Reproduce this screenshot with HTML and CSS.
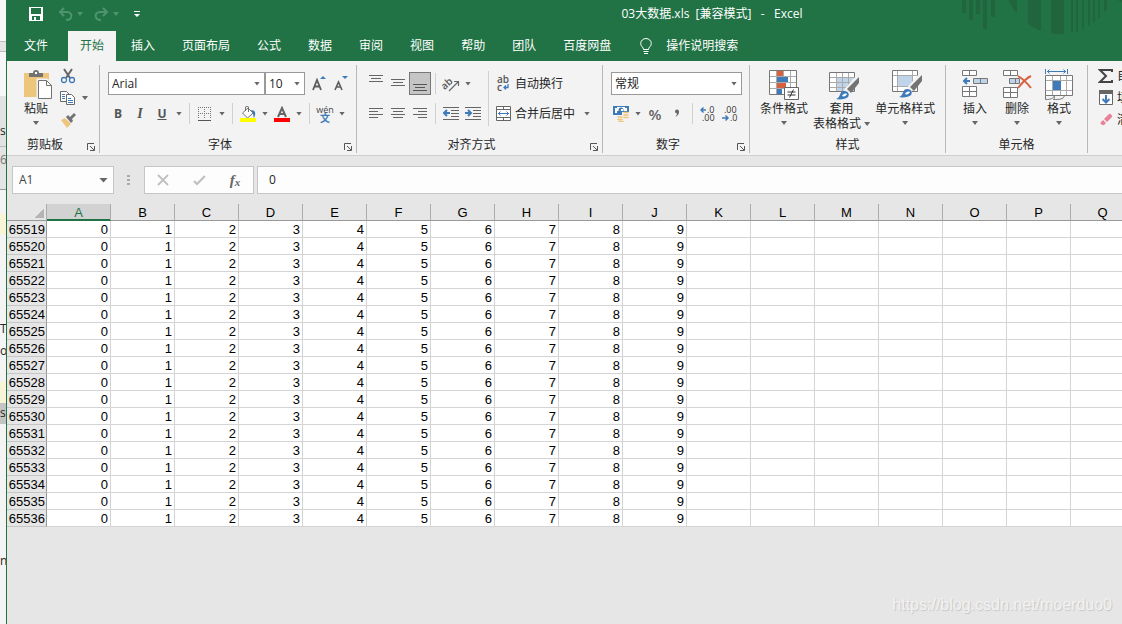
FILE: index.html
```html
<!DOCTYPE html>
<html lang="zh-CN">
<head>
<meta charset="utf-8">
<title>03大数据.xls - Excel</title>
<link rel="stylesheet" href="styles.css">
</head>
<body>
<div class="desktop">
  <aside class="behind" aria-hidden="true">
    <div class="strip s-top"></div>
    <div class="strip s-bar"></div>
    <div class="strip s-line"></div>
    <div class="strip s-gray">s</div>
    <div class="strip s-gray2">6</div>
    <div class="strip s-white"></div>
    <div class="strip s-yellow"></div>
    <div class="strip s-code"><span>Te</span><span>ou</span></div>
    <div class="strip s-yellow"></div>
    <div class="strip s-sel">s</div>
    <div class="strip s-rest">n</div>
  </aside>
  <main class="window">
    <header class="titlebar">
      <svg class="ornament" width="160" height="36" viewBox="962 0 160 36" aria-hidden="true">
        <defs><clipPath id="disc"><circle cx="1060" cy="-22" r="56"/></clipPath></defs>
        <path d="M962 0h4v13h-4zM969 0h4v20h-4zM976 0h4v14h-4zM983 0h4v29h-4zM991 0h4v17h-4z"/>
        <path clip-path="url(#disc)" d="M1004 0h13v36h-13zM1028 0h13v36h-13zM1051 0h13v36h-13zM1071 0h2v36h-2zM1076 0h2v36h-2zM1082 0h2v36h-2zM1088 0h2v36h-2zM1093 0h2v36h-2zM1098 0h2v36h-2zM1104 0h3v36h-3z"/>
        <path d="M1117 0h5v2z"/>
      </svg>
      <div class="quick">
        <button aria-label="保存"><svg width="14" height="14" viewBox="0 0 14 14"><path fill="#fff" fill-rule="evenodd" d="M0 0h14v14H0zM2 1v6h10V1zM3 9v4h2v-3h2v3h4V9z"/></svg></button>
        <button class="dim" aria-label="撤消"><svg width="15" height="14" viewBox="0 0 15 14"><path fill="none" stroke="currentColor" stroke-width="2" d="M6 1L2 5l4 4M2 5h7c6 0 6 8-1 8"/></svg><i class="caret"></i></button>
        <button class="dim" aria-label="恢复"><svg width="15" height="14" viewBox="0 0 15 14"><path fill="none" stroke="currentColor" stroke-width="2" d="M9 1l4 4-4 4M13 5H6c-6 0-6 8 1 8"/></svg><i class="caret"></i></button>
        <button aria-label="自定义快速访问工具栏"><svg width="6" height="6" viewBox="0 0 6 6"><path fill="#fff" d="M0 0h6v1H0zM0 3h6L3 6z"/></svg></button>
      </div>
      <h1 class="title">03大数据.xls&nbsp; [兼容模式]&nbsp;&nbsp; -&nbsp;&nbsp; Excel</h1>
    </header>
    <nav class="tabs">
      <button class="file">文件</button>
      <button class="active">开始</button>
      <button>插入</button>
      <button>页面布局</button>
      <button>公式</button>
      <button>数据</button>
      <button>审阅</button>
      <button>视图</button>
      <button>帮助</button>
      <button>团队</button>
      <button>百度网盘</button>
      <button class="tell"><svg width="12" height="17" viewBox="0 0 12 17"><path fill="none" stroke="#fff" d="M3.500 11.500C3.500 9 .7 8.500.7 5.500a5.300 5 0 0 1 10.600 0c0 3-2.800 3.500-2.800 6zM3.500 13.500h5M4 15.500h4"/></svg>操作说明搜索</button>
    </nav>

    <section class="ribbon">
      <div class="group g-clip">
        <div class="body">
          <button class="big"><svg width="30" height="30" viewBox="0 0 30 30"><path fill="#edc67b" d="M1 3h25v24H1z"/><path fill="#737373" d="M6 3h4a3 3 0 0 1 6 0h4v4H6z"/><path fill="#fff" d="M12 2h2v2h-2z"/><path fill="#fff" stroke="#f2f2f2" stroke-width="3" d="M15 10h9l5 5v14H15z"/><path fill="#fff" stroke="#737373" d="M15.500 10.500h8l5 5v13h-13zM23.500 10.500v5h5"/></svg><span>粘贴</span><i class="caret"></i></button>
          <div class="stack">
            <button aria-label="剪切"><svg width="16" height="16" viewBox="0 0 16 16"><path fill="none" stroke="#666" stroke-width="2" d="M4 1l6 9M12 1l-6 9"/><path fill="none" stroke="#3f7bb8" stroke-width="1.300" d="M6.500 12a2.500 2.500 0 1 1-5 0 2.500 2.500 0 0 1 5 0zM14.500 12a2.500 2.500 0 1 1-5 0 2.500 2.500 0 0 1 5 0z"/></svg></button>
            <button aria-label="复制"><svg width="16" height="16" viewBox="0 0 16 16"><path fill="#fff" stroke="#6a6a6a" d="M.5 1.500h6l3 3v7h-9z"/><path fill="#fff" stroke="#6a6a6a" d="M6.500 4.500h5l3 3v7h-8z"/><path stroke="#3f7bb8" d="M2 4.500h3M2 6.500h3M2 8.500h3M8 8.500h3M8 10.500h5M8 12.500h5"/></svg><i class="caret"></i></button>
            <button aria-label="格式刷"><svg width="16" height="16" viewBox="0 0 16 16"><path fill="#edc67b" d="M1 8l4-2 6 6-4 4z"/><path fill="#737373" d="M6 5l2-2 2 2 4-4 2 2-4 4 1 2-2 2z"/></svg></button>
          </div>
        </div>
        <div class="foot"><span>剪贴板</span><button class="launch" aria-label="剪贴板设置"><svg width="8" height="8" viewBox="0 0 8 8"><path fill="none" stroke="#555" d="M.5 7V.5H7M3 3l4 4M7.500 3v4.500H3"/></svg></button></div>
      </div>

      <div class="group g-font">
        <div class="body rows">
          <div class="row fields">
            <label class="combo font"><select aria-label="字体"><option>Arial</option></select><i class="caret"></i></label>
            <label class="combo size"><select aria-label="字号"><option>10</option></select><i class="caret"></i></label>
            <button class="tool grow" aria-label="增大字号"><svg width="14" height="16" viewBox="0 0 14 16"><path fill="none" stroke="#5c5c5c" stroke-width="1.800" d="M1 14L5 4l4 10M2.500 10.500h5"/><path fill="#3f7bb8" d="M8 3h6l-3-3z"/></svg></button>
            <button class="tool" aria-label="减小字号"><svg width="14" height="16" viewBox="0 0 14 16"><path fill="none" stroke="#5c5c5c" stroke-width="1.600" d="M1 14l3.500-8L8 14M2.500 11h4"/><path fill="#3f7bb8" d="M8 0h6l-3 3z"/></svg></button>
          </div>
          <div class="row">
            <button class="tool b">B</button><button class="tool i">I</button><button class="tool u">U</button><button class="drop" aria-label="下划线选项"><i class="caret"></i></button>
            <i class="sep"></i>
            <button class="tool" aria-label="边框"><svg width="14" height="14" viewBox="0 0 14 14"><path fill="none" stroke="#777" stroke-dasharray="1 1" d="M0 .5h13M0 6.500h13M.5 0v12M6.500 0v12M12.500 0v12"/><path stroke="#555" d="M0 13.500h13"/></svg></button><button class="drop" aria-label="边框选项"><i class="caret"></i></button>
            <i class="sep"></i>
            <button class="tool" aria-label="填充颜色"><svg width="16" height="16" viewBox="0 0 16 16"><path fill="#fff" stroke="#737373" d="M2.500 7L8 2l5 5-5.500 5z"/><path fill="none" stroke="#737373" d="M5.500 5V1c0-1 3-1 3 0v5"/><path fill="#3f7bb8" d="M11 4c5 0 5 4 3 8-1-2 0-4-3-8z"/><path fill="#ff0" d="M0 12h16v4H0z"/></svg></button><button class="drop" aria-label="填充颜色选项"><i class="caret"></i></button>
            <button class="tool" aria-label="字体颜色"><svg width="16" height="16" viewBox="0 0 16 16"><path fill="none" stroke="#666" stroke-width="2" d="M4 11l4-9 4 9M5.500 8h5"/><path fill="#f00" d="M0 12h16v4H0z"/></svg></button><button class="drop" aria-label="字体颜色选项"><i class="caret"></i></button>
            <i class="sep"></i>
            <button class="tool pinyin"><span>wén</span><b>文</b></button><button class="drop" aria-label="拼音选项"><i class="caret"></i></button>
          </div>
        </div>
        <div class="foot"><span>字体</span><button class="launch" aria-label="字体设置"><svg width="8" height="8" viewBox="0 0 8 8"><path fill="none" stroke="#555" d="M.5 7V.5H7M3 3l4 4M7.500 3v4.500H3"/></svg></button></div>
      </div>

      <div class="group g-align">
        <div class="body">
          <div class="rows">
            <div class="row">
              <button class="tool" aria-label="顶端对齐"><svg width="14" height="17" viewBox="0 0 14 17"><path stroke="#666" d="M0 .5h14M2 3.500h10M0 6.500h14"/></svg></button><button class="tool" aria-label="垂直居中"><svg width="14" height="17" viewBox="0 0 14 17"><path stroke="#666" d="M0 4.500h14M2 7.500h10M0 10.500h14"/></svg></button><button class="tool pressed" aria-label="底端对齐"><svg width="14" height="17" viewBox="0 0 14 17"><path stroke="#555" d="M0 9.500h14M2 12.500h10M0 15.500h14"/></svg></button>
              <i class="sep"></i>
              <button class="tool" aria-label="方向"><svg width="18" height="16" viewBox="0 0 18 16"><text class="ab" x="-1" y="11" transform="rotate(-42 5 8)">ab</text><path fill="none" stroke="#666" stroke-width="1.200" d="M7 15l9-9M12 5.500h4.500V10"/></svg></button><button class="drop" aria-label="方向选项"><i class="caret"></i></button>
            </div>
            <div class="row">
              <button class="tool" aria-label="左对齐"><svg width="14" height="11" viewBox="0 0 14 11"><path stroke="#666" d="M0 .5h14M0 3.500h9M0 6.500h14M0 9.500h9"/></svg></button><button class="tool" aria-label="居中"><svg width="14" height="11" viewBox="0 0 14 11"><path stroke="#666" d="M0 .5h14M2 3.500h10M0 6.500h14M2 9.500h10"/></svg></button><button class="tool" aria-label="右对齐"><svg width="14" height="11" viewBox="0 0 14 11"><path stroke="#666" d="M0 .5h14M5 3.500h9M0 6.500h14M5 9.500h9"/></svg></button>
              <i class="sep"></i>
              <button class="tool" aria-label="减少缩进量"><svg width="16" height="13" viewBox="0 0 16 13"><path stroke="#666" d="M0 .5h16M8 3.500h8M8 6.500h8M8 9.500h8M0 12.500h16"/><path fill="none" stroke="#3f7bb8" stroke-width="2" d="M7 6H1M4 3L1 6l3 3"/></svg></button><button class="tool" aria-label="增加缩进量"><svg width="16" height="13" viewBox="0 0 16 13"><path stroke="#666" d="M0 .5h16M8 3.500h8M8 6.500h8M8 9.500h8M0 12.500h16"/><path fill="none" stroke="#3f7bb8" stroke-width="2" d="M0 6h6M3 3l3 3-3 3"/></svg></button>
            </div>
          </div>
          <i class="sep tall"></i>
          <div class="rows">
            <div class="row"><button class="wide"><svg width="16" height="17" viewBox="0 0 16 17"><text class="ab" x="1" y="8">ab</text><text class="ab" x="1" y="16">c</text><path fill="none" stroke="#3f7bb8" stroke-width="1.300" d="M12 9v3.500H8M10 10.500l-2 2 2 2"/></svg>自动换行</button></div>
            <div class="row"><button class="wide"><svg width="16" height="15" viewBox="0 0 16 15"><path fill="#fff" stroke="#666" d="M.5 .5h14v14H.5zM0 3.500h15M0 11.500h15M7.500 0v3M7.500 12v3"/><path fill="none" stroke="#3f7bb8" d="M2 7.500h11M4.500 5.500l-2 2 2 2M10.500 5.500l2 2-2 2"/></svg>合并后居中<i class="caret"></i></button></div>
          </div>
        </div>
        <div class="foot"><span>对齐方式</span><button class="launch" aria-label="对齐设置"><svg width="8" height="8" viewBox="0 0 8 8"><path fill="none" stroke="#555" d="M.5 7V.5H7M3 3l4 4M7.500 3v4.500H3"/></svg></button></div>
      </div>

      <div class="group g-number">
        <div class="body rows">
          <div class="row fields"><label class="combo number"><select aria-label="数字格式"><option>常规</option></select><i class="caret"></i></label></div>
          <div class="row">
            <button class="tool" aria-label="会计数字格式"><svg width="17" height="17" viewBox="0 0 17 17"><path fill="#3f7bb8" d="M0 1h16v9H0z"/><path fill="#fff" d="M4 2h8v1h2v3H4v2H2V3h2z"/><circle cx="8" cy="5" r="2.500" fill="#3f7bb8"/><path fill="#fff" d="M8 4h2v2H8z"/><path fill="#f3f3f3" d="M9 7h8v10H3v-6h6z"/><path stroke="#edc67b" stroke-width="1.600" stroke-linecap="round" d="M11 7.500h4M11 10h4M11 12.500h4M5 12h4M5 14.500h4M6 16.500h4"/></svg></button><button class="drop" aria-label="会计格式选项"><i class="caret"></i></button>
            <button class="tool pct">%</button>
            <button class="tool" aria-label="千位分隔样式"><svg width="6" height="9" viewBox="0 0 6 9"><path fill="#666" d="M1 2.500a2 2 0 0 1 4 0C5 5 4 7 1 8c1-1 2-2 2-3.500-1 0-2-1-2-2z"/></svg></button>
            <i class="sep"></i>
            <button class="tool" aria-label="增加小数位数"><svg width="16" height="16" viewBox="0 0 16 16"><text class="dec" x="7" y="7">.0</text><text class="dec" x="2" y="15">.00</text><path fill="none" stroke="#3f7bb8" stroke-width="1.500" d="M6 4H1M3.500 1.500L1 4l2.500 2.500"/></svg></button><button class="tool" aria-label="减少小数位数"><svg width="16" height="16" viewBox="0 0 16 16"><text class="dec" x="2" y="7">.00</text><text class="dec" x="8" y="15">.0</text><path fill="none" stroke="#3f7bb8" stroke-width="1.500" d="M0 12h6M3.500 9.500L6 12l-2.500 2.500"/></svg></button>
          </div>
        </div>
        <div class="foot"><span>数字</span><button class="launch" aria-label="数字设置"><svg width="8" height="8" viewBox="0 0 8 8"><path fill="none" stroke="#555" d="M.5 7V.5H7M3 3l4 4M7.500 3v4.500H3"/></svg></button></div>
      </div>

      <div class="group g-styles">
        <div class="body">
          <button class="big"><svg width="30" height="30" viewBox="0 0 30 30"><path fill="#fff" d="M1 0h27v25H1z"/><path fill="#d9603f" d="M8 1h7v6H8zM8 13h9v6H8z"/><path fill="#3f7bb8" d="M8 7h11v6H8zM8 19h5v6H8z"/><path fill="none" stroke="#aaa" d="M1 6.500h27M1 12.500h27M1 18.500h27M7.500 1v24M14.500 1v5M21.500 1v24"/><path fill="none" stroke="#777" d="M.5.5h27v24H.5z"/><path fill="#fff" stroke="#666" d="M15.500 17.500h14v12h-14z"/><path stroke="#333" d="M18.500 22h8M18.500 25h8M24.500 19.500l-4 8"/></svg><span>条件格式</span><i class="caret"></i></button>
          <button class="big shift"><svg width="30" height="30" viewBox="0 0 30 30"><path fill="#fff" d="M1 2h25v20H1z"/><path fill="#bfd3e9" d="M7 8h19v14H7z"/><path fill="none" stroke="#aaa" d="M1 7.500h25M1 12.500h25M1 17.500h25M7.500 2v20M13.500 2v20M19.500 2v20"/><path fill="none" stroke="#777" d="M.5 2.500h25v19H.5z"/><path stroke="#f2f2f2" stroke-width="6" d="M30 7L17 22"/><path fill="#737373" d="M30 7v6l-8 10-4-4z"/><path fill="#3f7bb8" d="M7 29c5-1 3-8 8-8 4 0 6 3 4 6-2 2-8 3-12 2z"/><path fill="#fff" d="M13 26c1-2 3-3 5-2-1 2-3 3-5 2z"/></svg><span>套用</span><span>表格格式 <i class="caret"></i></span></button>
          <button class="big shift"><svg width="30" height="30" viewBox="0 0 30 30"><path fill="#fff" d="M1 0h25v21H1z"/><path fill="#bfd3e9" d="M6 6h14v10H6z"/><path fill="none" stroke="#aaa" d="M1 5.500h25M1 16.500h25M5.500 1v20M20.500 1v20"/><path fill="none" stroke="#777" d="M.5.500h25v21H.5z"/><path stroke="#f2f2f2" stroke-width="6" d="M30 5L17 20"/><path fill="#737373" d="M30 5v6l-8 10-4-4z"/><path fill="#3f7bb8" d="M7 27c5-1 3-8 8-8 4 0 6 3 4 6-2 2-8 3-12 2z"/><path fill="#fff" d="M13 24c1-2 3-3 5-2-1 2-3 3-5 2z"/></svg><span>单元格样式</span><i class="caret"></i></button>
        </div>
        <div class="foot"><span>样式</span></div>
      </div>

      <div class="group g-cells">
        <div class="body">
          <button class="big"><svg width="28" height="30" viewBox="0 0 28 30"><path fill="#fff" stroke="#777" d="M1.500.5h14v5h-14zM8.500.5v5M1.500 16.500h14v10h-14zM1.500 21.500h14M8.500 16.500v10"/><path fill="#bfd3e9" stroke="#777" d="M12.500 8.500h14v5h-14zM19.500 8.500v5"/><path fill="none" stroke="#3f7bb8" stroke-width="2" d="M9 11H3M6 8l-3 3 3 3"/></svg><span>插入</span><i class="caret"></i></button>
          <button class="big"><svg width="30" height="30" viewBox="0 0 30 30"><path fill="#fff" stroke="#777" d="M1.500.5h14v5h-14zM8.500.5v5M1.500 17.500h14v10h-14zM1.500 22.500h14M8.500 17.500v10"/><path fill="#bfd3e9" stroke="#777" d="M7.500 8.500h10v5h-10zM13.500 8.500v5"/><path fill="none" stroke="#d9603f" stroke-width="2" d="M16 6c5 3 9 7 13 12M29 6c-5 2-9 7-13 12"/></svg><span>删除</span><i class="caret"></i></button>
          <button class="big"><svg width="28" height="32" viewBox="0 0 28 32"><path fill="none" stroke="#3f7bb8" d="M.5 0v5M22.500 0v5M2 2.500h19M4.500 .5l-2 2 2 2M18.500 .5l2 2-2 2"/><path fill="#fff" d="M1 7h26v19H1z"/><path fill="none" stroke="#aaa" d="M7.500 7v19M15.500 7v19M21.500 7v19M1 11.500h26M1 21.500h26"/><path fill="#3f7bb8" d="M8 12h8v9H8z"/><path fill="none" stroke="#777" d="M.5 6.500h27v20H.5zM.5 26.500v4c5 0 8-1 9-4 0 4-1 4-1 4 6 0 10 0 11-4"/></svg><span>格式</span><i class="caret"></i></button>
        </div>
        <div class="foot"><span>单元格</span></div>
      </div>

      <div class="group g-edit">
        <div class="body">
          <div class="stack">
            <button><svg width="16" height="16" viewBox="0 0 16 16"><path fill="none" stroke="#444" stroke-width="2" d="M14 4V2H2l6 6-6 6h12v-2"/></svg>自动求和</button>
            <button><svg width="16" height="16" viewBox="0 0 16 16"><path fill="#fff" stroke="#666" d="M1.500 1.500h13v13h-13z"/><path fill="#666" d="M1 0h14v4H1z"/><path fill="none" stroke="#3f7bb8" stroke-width="2" d="M8 5v7M4.500 9L8 12.500 11.500 9"/></svg>填充</button>
            <button><svg width="16" height="16" viewBox="0 0 16 16"><path fill="#e8819a" d="M6 7l5-5c1-1 4 2 3 3L9 10zM5 8l3 3-2 2c-1 1-5-2-3-3z"/></svg>清除</button>
          </div>
        </div>
      </div>
    </section>

    <section class="formula">
      <div class="namebox"><input aria-label="名称框" value="A1"><i class="caret large"></i></div>
      <i class="grip"></i>
      <div class="fx">
        <button aria-label="取消"><svg width="12" height="12" viewBox="0 0 12 12"><path stroke="#c0c0c0" stroke-width="1.800" d="M1 1l10 10M11 1L1 11"/></svg></button>
        <button aria-label="输入"><svg width="13" height="11" viewBox="0 0 13 11"><path fill="none" stroke="#c0c0c0" stroke-width="2.200" d="M1 6l3 3 8-8"/></svg></button>
        <button class="fn" aria-label="插入函数">f<small>x</small></button>
      </div>
      <input class="bar" aria-label="编辑栏" value="0">
    </section>

    <div class="sheet"><table><thead id="head"></thead><tbody id="rows"></tbody></table></div>
    <p class="mark">https://blog.csdn.net/moerduo0</p>
  </main>
</div>
<script src="sheet.js"></script>
</body>
</html>
```
FILE: styles.css
```css
* { box-sizing: border-box; }
body {
  margin: 0;
  overflow: hidden;
  font: 12px/16px "Open Sans", "Noto Sans CJK SC", sans-serif;
  color: #262626;
}
button, input, select { font: inherit; color: inherit; border: 0; padding: 0; margin: 0; background: none; }
button { display: flex; align-items: center; justify-content: center; white-space: nowrap; }
svg { flex: none; display: block; }
.desktop { display: flex; min-height: 100vh; background: #e6e6e6; }

/* Window lying behind the spreadsheet */
.behind { width: 6px; flex: none; overflow: hidden; background: #f4f4f4; font-size: 12px; line-height: 16px; }
.strip { overflow: hidden; }
.s-top { height: 41px; background: #f6f6f6; }
.s-bar { height: 11px; background: #e4e4e4; border-top: 1px solid #bbb; border-bottom: 1px solid #bbb; }
.s-line { height: 44px; background: #f7f7f7; }
.s-gray { height: 50px; padding-top: 27px; background: #e2e2e2; }
.s-gray2 { height: 44px; padding-top: 5px; background: #e4e4e4; border-top: 1px solid #bbb; border-bottom: 1px solid #999; color: #777; }
.s-white { height: 24px; }
.s-yellow { height: 21px; background: #f7f5d6; }
.s-code { height: 147px; padding-top: 86px; display: flex; flex-direction: column; gap: 6px; }
.s-sel { height: 21px; padding-top: 2px; background: #c4c4c4; }
.s-rest { height: 200px; padding-top: 129px; }

/* Title bar and tabs */
.window { position: relative; flex: 1; min-width: 0; display: flex; flex-direction: column; border-left: 1px solid #217346; overflow: hidden; }
.titlebar { position: relative; height: 28px; background: #217346; color: #fff; display: flex; align-items: center; }
.ornament { position: absolute; top: 0; right: 0; z-index: 1; fill: #21653e; }
.quick { display: flex; align-items: center; width: 295px; padding-left: 22px; }
.quick button { gap: 4px; margin-right: 15px; }
.quick .dim { color: #4f9470; margin-right: 11px; }
.quick .dim:nth-child(3) { margin-right: 15px; }
.title { flex: 1; margin: 0; text-align: center; font-size: 12px; font-weight: 400; }
.tabs { height: 33px; padding: 3px 0 0 5px; display: flex; gap: 3px; background: #217346; color: #fff; }
.tabs button { padding: 0 12px; }
.tabs .file { margin-right: 5px; }
.tabs .active { background: #f3f3f3; color: #217346; }
.tabs .tell { padding-left: 14px; gap: 14px; }

.caret { flex: none; width: 6px; height: 4px; background: #666; clip-path: polygon(0 0, 100% 0, 50% 100%); }
.caret.large { width: 9px; height: 5px; }
.dim .caret { background: currentColor; }

/* Ribbon */
.ribbon { height: 95px; padding: 4px 0 2px; display: flex; background: #f3f3f3; border-bottom: 1px solid #cfcfcf; overflow: hidden; }
.group { flex: none; display: flex; flex-direction: column; justify-content: space-between; border-right: 1px solid #b8b8b8; }
.body { display: flex; padding: 0 0 0 7px; }
.foot { display: flex; height: 16px; align-items: center; text-align: center; }
.foot span { flex: 1; }
.launch { width: 16px; height: 16px; padding-top: 4px; }
.rows { display: flex; flex-direction: column; gap: 7px; padding-top: 7px; }
.row { display: flex; align-items: center; height: 23px; }
.tool { width: 22px; height: 23px; }
.drop { width: 12px; height: 23px; }
.sep { width: 1px; height: 21px; margin: 0 4px; background: #d0d0d0; }
.sep.tall { height: 55px; margin-top: 6px; }
.pressed { background: #c5c5c5; border: 1px solid #777; }
.combo { position: relative; display: flex; align-items: center; height: 23px; background: #fff; border: 1px solid #999; }
.combo select { appearance: none; width: 100%; height: 21px; padding-left: 3px; }
.combo .caret { position: absolute; right: 4px; }
.fields { padding-left: 1px; }
.font { width: 157px; }
.size { width: 40px; }
.number { width: 131px; }
.grow { margin-left: 3px; }
.b, .u { font-weight: 700; color: #555; }
.i { font-style: italic; font-weight: 700; font-family: "Liberation Serif", serif; font-size: 14px; color: #555; }
.u { text-decoration: underline; }
.pinyin { flex-direction: column; line-height: 9px; font-size: 9px; color: #444; }
.pinyin b { font-size: 10px; color: #3f7bb8; }
.pct { font-size: 15px; font-weight: 600; color: #666; }
.ab { font: 600 10px "Open Sans", sans-serif; fill: #555; }
.dec { font: 9px "Open Sans", sans-serif; fill: #333; }
.wide { padding-left: 3px; gap: 3px; }
.wide .caret { margin-left: 6px; }
.g-align .body, .g-styles .body, .g-cells .body { padding-left: 8px; }
.g-clip { width: 93px; }
.g-clip .body { padding-left: 14px; }
.g-font { width: 257px; }
.g-align { width: 246px; }
.g-number { width: 147px; }
.g-styles { width: 196px; }
.g-cells { width: 142px; }
.big { flex-direction: column; justify-content: flex-start; padding-top: 4px; }
.big svg { height: 32px; }
.big .caret { margin-top: 5px; }
.big span .caret { display: inline-block; margin: 0 0 2px; }
.big span { line-height: 15px; }
.g-clip .big { width: 30px; }
.g-clip .big svg, .shift svg { margin-left: 4px; }
.stack { display: flex; flex-direction: column; margin-left: 9px; }
.stack button { height: 22px; justify-content: flex-start; gap: 6px; }
.g-styles .body { gap: 1px; }
.g-styles .big { min-width: 52px; padding-left: 2px; padding-right: 2px; }
.g-cells .big { width: 42px; }
.g-edit { border-right: 0; }
.g-edit .stack { margin-left: 3px; }
.g-edit .stack button { gap: 3px; }

/* Formula bar */
.formula { height: 48px; padding: 10px 0 10px 5px; display: flex; background: #e6e6e6; }
.namebox, .fx { display: flex; align-items: center; background: #fdfdfd; border: 1px solid #c6c6c6; }
.namebox { width: 102px; padding: 0 5px 0 6px; }
.namebox input { width: 100%; min-width: 0; color: #444; }
.grip { width: 3px; height: 11px; margin: 9px 14px 0 13px; background: repeating-linear-gradient(#aaa 0 2px, #e6e6e6 2px 4px); }
.fx { width: 110px; margin-right: 3px; }
.fx button { flex: 1; }
.fn { font: italic 700 15px "Liberation Serif", serif; color: #666; }
.fn small { font-size: 11px; padding-top: 4px; }
.bar { flex: 1; min-width: 0; background: #fdfdfd; border: 1px solid #c6c6c6; border-right: 0; padding-left: 11px; }

/* Grid */
.sheet { overflow: hidden; }
table { border-collapse: separate; border-spacing: 0; table-layout: fixed; width: 1192px; font: 13px/15px "Liberation Sans", Arial, sans-serif; color: #000; }
th, td { height: 17px; padding: 1px 0 0; font-weight: 400; }
thead th { width: 64px; background: #e6e6e6; border-right: 1px solid #ababab; border-bottom: 1px solid #999; }
thead .corner { width: 40px; background: linear-gradient(135deg, #e6e6e6 50%, #b4b4b4 50%) 27px 4px / 10px 10px no-repeat #e6e6e6; }
thead .on { background: #d2d2d2; color: #217346; box-shadow: inset 0 -1px #217346; border-bottom-color: #217346; }
tbody th { background: #e6e6e6; border-right: 1px solid #999; border-bottom: 1px solid #c6c6c6; text-align: right; padding-right: 1px; }
td { background: #fff; border-right: 1px solid #d4d4d4; border-bottom: 1px solid #d4d4d4; text-align: right; padding-right: 2px; }
.mark { position: absolute; right: 10px; bottom: 10px; margin: 0; font: 16px/18px "Liberation Sans", Arial, sans-serif; color: #f2f2f2; text-shadow: 1px 1px 1px #c6c6c6; }
```
FILE: sheet.js
```js
const columns = "ABCDEFGHIJKLMNOPQR".split("");
document.getElementById("head").innerHTML =
  '<tr><th class="corner"></th>' +
  columns.map((c, i) => `<th${i ? "" : ' class="on"'}>${c}</th>`).join("") + "</tr>";

let body = "";
for (let n = 65519; n <= 65536; n++) {
  body += `<tr><th>${n}</th>` + columns.map((c, i) => `<td>${i < 10 ? i : ""}</td>`).join("") + "</tr>";
}
document.getElementById("rows").innerHTML = body;
```
